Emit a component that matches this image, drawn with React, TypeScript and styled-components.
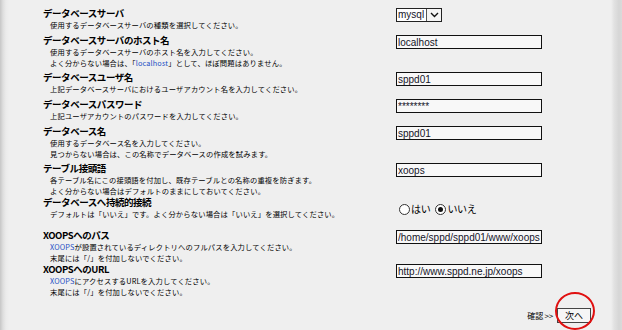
import styled, { createGlobalStyle } from 'styled-components'

const GlobalStyle = createGlobalStyle`
  html, body {
    margin: 0;
    padding: 0;
    height: 330px;
    overflow: hidden;
  }
  body {
    background: linear-gradient(
      to right,
      #c6c6c6 0,
      #dedede 3px,
      #ebebeb 6px,
      #efefef 9px,
      #efefef 611px,
      #e2e2e2 614px,
      #d6d6d6 619px,
      #dadada 622px
    );
    font-family: 'Noto Sans CJK JP', 'Noto Sans', sans-serif;
    color: #000;
  }
`

type Field = {
  title: string
  desc: React.ReactNode[]
  h: number
  input: React.ReactNode
}

export default function App() {
  const fields: Field[] = [
    {
      title: 'データベースサーバ',
      desc: ['使用するデータベースサーバの種類を選択してください。'],
      h: 27,
      input: (
        <S.Select>
          <S.SelectValue>mysql</S.SelectValue>
          <S.SelectArrow>
            <svg width="9" height="6" viewBox="0 0 9 6">
              <path d="M1 1 L4.5 4.5 L8 1" fill="none" stroke="#111" strokeWidth="1.4" />
            </svg>
          </S.SelectArrow>
        </S.Select>
      ),
    },
    {
      title: 'データベースサーバのホスト名',
      desc: [
        '使用するデータベースサーバのホスト名を入力してください。',
        <>
          よく分からない場合は、「<S.Link>localhost</S.Link>」として、ほぼ問題はありません。
        </>,
      ],
      h: 37,
      input: <S.Input defaultValue="localhost" />,
    },
    {
      title: 'データベースユーザ名',
      desc: ['上記データベースサーバにおけるユーザアカウント名を入力してください。'],
      h: 27,
      input: <S.Input defaultValue="sppd01" />,
    },
    {
      title: 'データベースパスワード',
      desc: ['上記ユーザアカウントのパスワードを入力してください。'],
      h: 27,
      input: <S.Input defaultValue="********" />,
    },
    {
      title: 'データベース名',
      desc: [
        '使用するデータベース名を入力してください。',
        '見つからない場合は、この名称でデータベースの作成を試みます。',
      ],
      h: 37,
      input: <S.Input defaultValue="sppd01" />,
    },
    {
      title: 'テーブル接頭語',
      desc: [
        '各テーブル名にこの接頭語を付加し、既存テーブルとの名称の重複を防ぎます。',
        'よく分からない場合はデフォルトのままにしておいてください。',
      ],
      h: 34,
      input: <S.Input defaultValue="xoops" />,
    },
    {
      title: 'データベースへ持続的接続',
      desc: ['デフォルトは「いいえ」です。よく分からない場合は「いいえ」を選択してください。'],
      h: 33,
      input: (
        <S.Radios>
          <S.RadioLabel>
            <S.Radio />
            はい
          </S.RadioLabel>
          <S.RadioLabel>
            <S.Radio $checked />
            いいえ
          </S.RadioLabel>
        </S.Radios>
      ),
    },
    {
      title: 'XOOPSへのパス',
      desc: [
        <>
          <S.Link>XOOPS</S.Link>が設置されているディレクトリへのフルパスを入力してください。
        </>,
        '末尾には「/」を付加しないでください。',
      ],
      h: 34,
      input: <S.Input defaultValue="/home/sppd/sppd01/www/xoops" />,
    },
    {
      title: 'XOOPSへのURL',
      desc: [
        <>
          <S.Link>XOOPS</S.Link>にアクセスするURLを入力してください。
        </>,
        '末尾には「/」を付加しないでください。',
      ],
      h: 37,
      input: <S.Input defaultValue="http://www.sppd.ne.jp/xoops" />,
    },
  ]

  return (
    <>
      <GlobalStyle />
      <S.Page>
        {fields.map((f) => (
          <S.Row key={f.title} $h={f.h}>
            <S.Label>
              <S.Title>{f.title}</S.Title>
              {f.desc.map((d, i) => (
                <S.Desc key={i}>{d}</S.Desc>
              ))}
            </S.Label>
            <S.Cell>{f.input}</S.Cell>
          </S.Row>
        ))}
        <S.Footer>
          <S.Confirm>確認 &gt;&gt;</S.Confirm>
          <S.ButtonWrap>
            <S.Button>次へ</S.Button>
            <S.Circle />
          </S.ButtonWrap>
        </S.Footer>
      </S.Page>
    </>
  )
}

const S = {
  Page: styled.div`
    padding: 7px 0 0 43px;
    width: 579px;
  `,
  Row: styled.div<{ $h: number }>`
    display: grid;
    grid-template-columns: 353px 146px;
    align-items: start;
    height: ${(p) => p.$h}px;
  `,
  Label: styled.div`
    display: flex;
    flex-direction: column;
  `,
  Title: styled.div`
    font-size: 9.5px;
    font-weight: 700;
    line-height: 13px;
    letter-spacing: -0.45px;
    white-space: nowrap;
  `,
  Desc: styled.div`
    padding-left: 7px;
    font-size: 7.3px;
    line-height: 10.6px;
    letter-spacing: 0.15px;
    white-space: nowrap;
  `,
  Link: styled.span`
    color: #1d4fc4;
  `,
  Cell: styled.div`
    display: flex;
    padding-top: 1px;
  `,
  Input: styled.input`
    box-sizing: border-box;
    width: 146px;
    height: 14px;
    margin: 0;
    padding: 0 0 0 1px;
    border: 1px solid #111;
    background: #f8f8f8;
    font-family: 'Liberation Sans', Arial, sans-serif;
    font-size: 10px;
    color: #141428;
    outline: none;
  `,
  Select: styled.div`
    box-sizing: border-box;
    display: flex;
    width: 46px;
    height: 14px;
    border: 1px solid #222;
    background: #fff;
  `,
  SelectValue: styled.span`
    flex: 1;
    padding-left: 1px;
    font-family: 'Liberation Sans', Arial, sans-serif;
    font-size: 10px;
    line-height: 12px;
    color: #141428;
  `,
  SelectArrow: styled.span`
    display: flex;
    align-items: center;
    justify-content: center;
    width: 14px;
    border-left: 1px solid #555;
    background: #f4f4f4;
  `,
  Radios: styled.div`
    display: flex;
    gap: 5px;
    margin: 5px 0 0 3px;
  `,
  RadioLabel: styled.label`
    display: flex;
    align-items: center;
    gap: 1px;
    font-size: 10px;
    line-height: 14px;
    letter-spacing: -0.3px;
  `,
  Radio: styled.span<{ $checked?: boolean }>`
    box-sizing: border-box;
    position: relative;
    width: 11px;
    height: 11px;
    border: 1px solid #333;
    border-radius: 50%;
    background: #fff;
    &::after {
      content: '';
      display: ${(p) => (p.$checked ? 'block' : 'none')};
      position: absolute;
      left: 2px;
      top: 2px;
      width: 5px;
      height: 5px;
      border-radius: 50%;
      background: #111;
    }
  `,
  Footer: styled.div`
    display: flex;
    justify-content: flex-end;
    align-items: center;
    gap: 4px;
    width: 548px;
    margin-top: 8px;
  `,
  Confirm: styled.span`
    font-size: 8px;
    letter-spacing: -0.2px;
    line-height: 15px;
  `,
  ButtonWrap: styled.div`
    position: relative;
  `,
  Button: styled.button`
    box-sizing: border-box;
    display: block;
    width: 34px;
    height: 15px;
    margin: 0;
    padding: 0;
    border: 1px solid #444;
    background: #f6f6f6;
    font-family: 'Noto Sans CJK JP', sans-serif;
    font-size: 9px;
    line-height: 13px;
    color: #000;
  `,
  Circle: styled.div`
    position: absolute;
    left: -2px;
    top: -16px;
    width: 40px;
    height: 38px;
    border: 2px solid #e01010;
    border-radius: 50%;
    box-sizing: border-box;
    pointer-events: none;
  `,
}
